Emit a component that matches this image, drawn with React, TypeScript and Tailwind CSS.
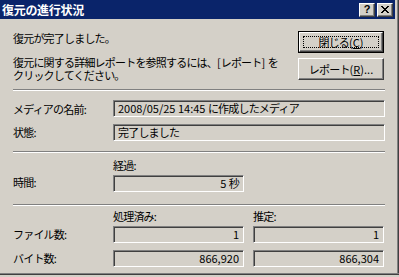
import React from "react";

const sunken =
  "border border-t-[#808080] border-l-[#808080] border-b-white border-r-white shadow-[inset_1px_1px_0_#404040,inset_-1px_-1px_0_#d4d0c8]";
const raised =
  "border border-t-white border-l-white border-b-[#404040] border-r-[#404040] shadow-[inset_-1px_-1px_0_#808080,inset_1px_1px_0_#d4d0c8]";

function Sep() {
  return (
    <div className="flex flex-col w-full">
      <div className="h-px bg-[#808080]" />
      <div className="h-px bg-white" />
    </div>
  );
}

function L({ children }: { children: React.ReactNode }) {
  return <span className="tracking-normal">{children}</span>;
}

function Field({
  children,
  right,
  className = "",
}: {
  children: React.ReactNode;
  right?: boolean;
  className?: string;
}) {
  return (
    <div
      className={`${sunken} h-[17px] flex items-center bg-[#d4d0c8] ${
        right ? "justify-end pr-[4px]" : "pl-[4px]"
      } ${className}`}
    >
      <span className="leading-[13px] whitespace-pre">{children}</span>
    </div>
  );
}

export default function App() {
  return (
    <div className="w-[399px] h-[277px] bg-[#d4d0c8] overflow-hidden flex flex-col font-['Noto_Sans_CJK_JP',sans-serif] text-[11px] text-black tracking-[-0.8px]">
      <div className="flex flex-1">
        <div className="flex flex-col w-[395px]">
          {/* Title bar */}
          <div className="h-[19px] bg-[#0a246a] flex items-center justify-between pl-[2px] pr-[2px]">
            <span className="text-white font-bold text-[12px] leading-[14px] tracking-[-0.3px]">
              復元の進行状況
            </span>
            <div className="flex gap-[2px]">
              <div
                className={`${raised} w-[16px] h-[14px] bg-[#d4d0c8] flex items-center justify-center`}
              >
                <span className="font-['Liberation_Sans',sans-serif] font-bold text-[11px] leading-[11px] tracking-normal">
                  ?
                </span>
              </div>
              <div
                className={`${raised} w-[16px] h-[14px] bg-[#d4d0c8] flex items-center justify-center`}
              >
                <svg width="8" height="7" viewBox="0 0 8 7">
                  <path
                    d="M0 0h2v1h1v1h2V1h1V0h2v1H7v1H6v1H5v1h1v1h1v1h1v1H6V6H5V5H3v1H2v1H0V6h1V5h1V4h1V3H2V2H1V1H0z"
                    fill="#000"
                  />
                </svg>
              </div>
            </div>
          </div>

          {/* Content */}
          <div className="pl-[13px] pr-[10px] flex flex-col">
            <div className="flex justify-between pt-[12px]">
              <div className="flex flex-col leading-[13px] pt-[1px]">
                <span>復元が完了しました。</span>
                <span className="mt-[11px] whitespace-pre">
                  復元に関する詳細レポートを参照するには、<L>[</L>レポート<L>] </L>を
                </span>
                <span>クリックしてください。</span>
              </div>
              <div className="flex flex-col w-[86px] mr-[1px]">
                <div className="border border-black h-[22px] flex">
                  <div
                    className={`${raised} flex-1 flex items-center justify-center p-[3px]`}
                  >
                    <div className="w-full h-full border border-dotted border-black flex items-center justify-center">
                      <span className="leading-[13px]">
                        閉じる<L>(</L>
                        <span className="underline tracking-normal">C</span>
                        <L>)</L>
                      </span>
                    </div>
                  </div>
                </div>
                <div
                  className={`${raised} h-[22px] mt-[5px] flex items-center justify-center`}
                >
                  <span className="leading-[13px]">
                    レポート<L>(</L>
                    <span className="underline tracking-normal">R</span>
                    <L>)...</L>
                  </span>
                </div>
              </div>
            </div>

            <div className="mt-[7px] w-[372px]">
              <Sep />
            </div>

            <div className="flex items-center mt-[9px] w-[372px]">
              <span className="w-[100px] leading-[13px] pt-[2px]">メディアの名前:</span>
              <Field className="flex-1">
                <L>2008/05/25 14:45 </L>に作成したメディア
              </Field>
            </div>
            <div className="flex items-center mt-[7px] w-[372px]">
              <span className="w-[100px] leading-[13px]">状態:</span>
              <Field className="flex-1">完了しました</Field>
            </div>

            <div className="mt-[10px] w-[372px]">
              <Sep />
            </div>

            <div className="flex w-[372px] mt-[6px]">
              <div className="w-[100px] flex items-end pb-[3px]">
                <span className="leading-[13px]">時間:</span>
              </div>
              <div className="flex flex-col w-[131px]">
                <span className="leading-[13px]">経過:</span>
                <Field right className="mt-[3px]">
                  <L>5 </L>秒
                </Field>
              </div>
            </div>

            <div className="mt-[12px] w-[372px]">
              <Sep />
            </div>

            <div className="flex w-[372px] mt-[4px] leading-[13px]">
              <div className="w-[100px]" />
              <span className="w-[131px]">処理済み:</span>
              <span className="ml-[9px]">推定:</span>
            </div>
            <div className="flex items-center w-[372px] mt-[3px]">
              <span className="w-[100px] leading-[13px]">ファイル数:</span>
              <Field right className="w-[131px]">
                <L>1</L>
              </Field>
              <Field right className="w-[131px] ml-[9px]">
                <L>1</L>
              </Field>
            </div>
            <div className="flex items-center w-[372px] mt-[7px]">
              <span className="w-[100px] leading-[13px]">バイト数:</span>
              <Field right className="w-[131px]">
                <L>866,920</L>
              </Field>
              <Field right className="w-[131px] ml-[9px]">
                <L>866,304</L>
              </Field>
            </div>
          </div>
        </div>
        <div className="w-[4px] flex">
          <div className="w-px bg-[#d4d0c8]" />
          <div className="w-px bg-[#d4d0c8]" />
          <div className="w-px bg-[#808080]" />
          <div className="w-px bg-[#404040]" />
        </div>
      </div>
      <div className="h-px bg-[#808080]" />
      <div className="h-px bg-[#404040]" />
      <div className="h-[2px] bg-[#d4d0c8]" />
    </div>
  );
}
